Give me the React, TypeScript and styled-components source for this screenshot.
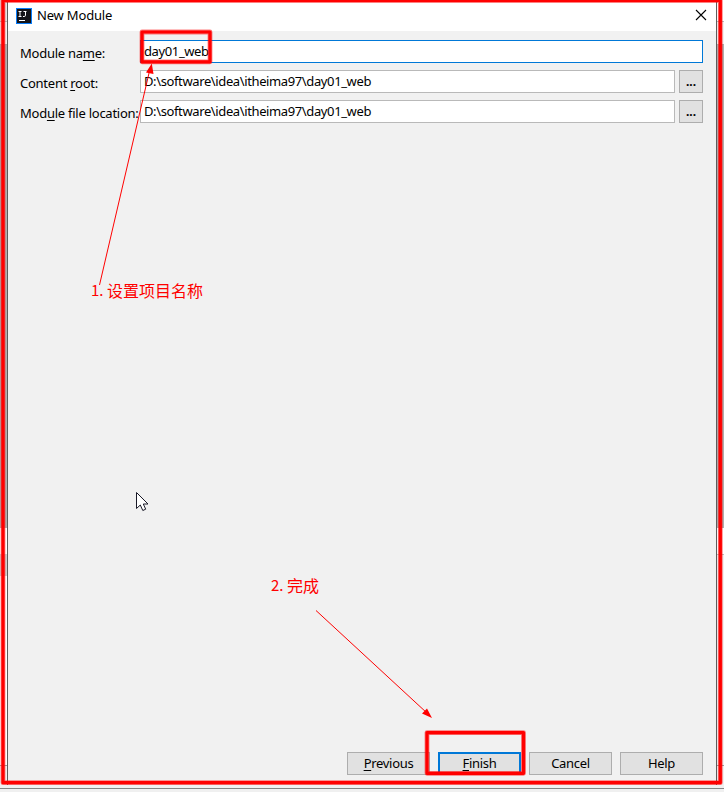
import React from "react";
import styled, { createGlobalStyle } from "styled-components";

const GlobalStyle = createGlobalStyle`
  *, *::before, *::after { box-sizing: border-box; }
  body { margin: 0; background: #f0f0f0; overflow: hidden; }
`;

const Desktop = styled.div`
  position: relative;
  width: 724px;
  height: 792px;
  display: grid;
  grid-template-columns: 7px 710px 7px;
  grid-template-rows: 788px 4px;
  overflow: hidden;
  color: #000;
  font: 13px/20px "Noto Sans", "Open Sans", sans-serif;
`;

const Backdrop = styled.div`
  display: flex;
  flex-direction: column;
`;

const Strip = styled.div<{ $h: number; $color: string; $line?: string }>`
  flex: 0 0 ${(p) => p.$h}px;
  background: ${(p) => p.$color};
  border-bottom: ${(p) => (p.$line ? `1px solid ${p.$line}` : "0")};
`;

const StatusEdge = styled.div`
  grid-column: 1 / -1;
  border-top: 1px solid #858585;
  background: #f0f0f0;
`;

const Dialog = styled.section`
  display: flex;
  flex-direction: column;
  height: 785px;
  border: solid #5c5c5c;
  border-width: 0 1px;
  background: #f1f1f1;
`;

const TitleBar = styled.header`
  display: flex;
  align-items: center;
  height: 31px;
  padding: 0 9px 0 8px;
  background: #fff;
`;

const Title = styled.h1`
  flex: 1;
  margin: 0 0 1px 5px;
  font-size: 13px;
  font-weight: 400;
  letter-spacing: -0.18px;
`;

const CloseButton = styled.button`
  display: flex;
  margin-bottom: 1px;
  padding: 0;
  border: 0;
  background: none;
`;

const Form = styled.div`
  flex: 1;
  display: flex;
  flex-direction: column;
  gap: 7px;
  padding: 9px 13px 0 12px;
`;

const Field = styled.div`
  display: flex;
  height: 23px;
`;

const Label = styled.label`
  width: 120px;
  flex: none;
  padding-top: 3px;
  letter-spacing: -0.25px;
  line-height: 20px;
  white-space: nowrap;
`;

const Mnemonic = styled.span`
  text-decoration: underline;
  text-decoration-thickness: 1px;
  text-underline-offset: 2px;
  text-decoration-skip-ink: none;
`;

const TextBox = styled.div<{ $focused?: boolean }>`
  flex: 1;
  display: flex;
  align-items: center;
  padding: 0 3px 2px;
  border: 1px solid ${(p) => (p.$focused ? "#0078d7" : "#b9b9b9")};
  background: #fff;
  letter-spacing: -0.38px;
  white-space: nowrap;
`;

const Caret = styled.span`
  width: 1px;
  height: 16px;
  background: #000;
`;

const BrowseButton = styled.button`
  width: 24px;
  margin-left: 4px;
  padding: 0;
  border: 1px solid #adadad;
  background: #e1e1e1;
  color: #000;
  font: bold 12px/18px "Noto Sans", sans-serif;
`;

const Footer = styled.footer`
  display: flex;
  justify-content: flex-end;
  gap: 8px;
  padding: 0 13px 10px 0;
`;

const ActionButton = styled.button<{ $primary?: boolean }>`
  width: 83px;
  height: 23px;
  padding: 0 0 2px;
  border: ${(p) => (p.$primary ? "2px solid #0078d7" : "1px solid #adadad")};
  background: #e1e1e1;
  color: #000;
  font: 13px/18px "Noto Sans", "Open Sans", sans-serif;
  letter-spacing: -0.3px;
`;

const Markup = styled.svg`
  position: absolute;
  inset: 0;
  pointer-events: none;
`;

const Note = styled.div<{ $x: number; $y: number }>`
  position: absolute;
  left: ${(p) => p.$x}px;
  top: ${(p) => p.$y}px;
  display: flex;
  color: #f00;
  font: 16px/20px "Noto Sans CJK SC", sans-serif;
  white-space: nowrap;
`;

const Step = styled.span`
  width: 16px;
  padding-top: 2px;
  font-family: "Noto Sans CJK SC", sans-serif;
  font-size: 15px;
  line-height: 16px;
`;

function AppIcon() {
  return (
    <svg width="16" height="16" viewBox="0 0 16 16">
      <rect width="16" height="16" fill="#087cfa" />
      <rect x="1" y="1" width="14" height="14" fill="#141418" />
      <path d="M2.5 3.5h3M4 3.5v5M2.5 8.5h3M7.5 3.5h3M9.5 3.5v3.7q0 1.3-1.3 1.3H7" fill="none" stroke="#fff" strokeWidth="1" />
      <path d="M3 12.5h6" stroke="#fff" />
    </svg>
  );
}

function Frames() {
  return (
    <>
      <rect x="3" y="0.5" width="717.3" height="782.2" />
      <rect x="142" y="32" width="68" height="29.8" />
      <rect x="427" y="732.6" width="96.5" height="40.7" />
    </>
  );
}

function Annotations() {
  return (
    <Markup width="724" height="792" viewBox="0 0 724 792" fill="none">
      <g stroke="#f00" strokeOpacity="0.5" strokeWidth="4.8" strokeLinejoin="round"><Frames /></g>
      <g stroke="#f00" strokeWidth="3.2" strokeLinejoin="round"><Frames /></g>
      <g stroke="#f00" strokeWidth="1">
        <path d="M99.5 285 149.5 71" />
        <path d="M316 610.5 427 713" />
      </g>
      <path d="M151.8 63.5 153.5 74 146 72.5ZM432 718 427 708.5 422 713.5Z" fill="#f00" />
      <path d="M136.5 492.5V508.5L140.3 505 142.8 510.5 145.7 509.2 143.3 504H148Z" fill="#fff" stroke="#191927" />
    </Markup>
  );
}

export default function App() {
  return (
    <>
      <GlobalStyle />
      <Desktop>
        <Backdrop>
          <Strip $h={22} $color="#e4e4e4" $line="#b8b8b8" />
          <Strip $h={23} $color="#f0f0f0" $line="#aaa" />
          <Strip $h={483} $color="#afafaf" />
          <Strip $h={26} $color="#fff" />
          <Strip $h={22} $color="#d0d0d0" />
          <Strip $h={190} $color="#fff" $line="#999" />
          <Strip $h={22} $color="#f0f0f0" />
        </Backdrop>
        <Dialog>
          <TitleBar>
            <AppIcon />
            <Title>New Module</Title>
            <CloseButton aria-label="Close">
              <svg width="12" height="12" viewBox="0 0 12 12">
                <path d="m1 1 10 10M11 1 1 11" stroke="#000" strokeWidth="1.1" />
              </svg>
            </CloseButton>
          </TitleBar>
          <Form>
            <Field>
              <Label>Module na<Mnemonic>m</Mnemonic>e:</Label>
              <TextBox $focused>day01_web<Caret /></TextBox>
            </Field>
            <Field>
              <Label>Content <Mnemonic>r</Mnemonic>oot:</Label>
              <TextBox>{"D:\\software\\idea\\itheima97\\day01_web"}</TextBox>
              <BrowseButton>...</BrowseButton>
            </Field>
            <Field>
              <Label>Mod<Mnemonic>u</Mnemonic>le file location:</Label>
              <TextBox>{"D:\\software\\idea\\itheima97\\day01_web"}</TextBox>
              <BrowseButton>...</BrowseButton>
            </Field>
          </Form>
          <Footer>
            <ActionButton><Mnemonic>P</Mnemonic>revious</ActionButton>
            <ActionButton $primary><Mnemonic>F</Mnemonic>inish</ActionButton>
            <ActionButton>Cancel</ActionButton>
            <ActionButton>Help</ActionButton>
          </Footer>
        </Dialog>
        <Backdrop>
          <Strip $h={22} $color="#fff" $line="#b8b8b8" />
          <Strip $h={23} $color="#f0f0f0" $line="#aaa" />
          <Strip $h={483} $color="#afafaf" />
          <Strip $h={27} $color="#fff" $line="#bbb" />
          <Strip $h={211} $color="#f0f0f0" $line="#999" />
          <Strip $h={22} $color="#f0f0f0" />
        </Backdrop>
        <StatusEdge />
        <Annotations />
        <Note $x={91} $y={280}><Step>1.</Step>设置项目名称</Note>
        <Note $x={271} $y={575}><Step>2.</Step>完成</Note>
      </Desktop>
    </>
  );
}
